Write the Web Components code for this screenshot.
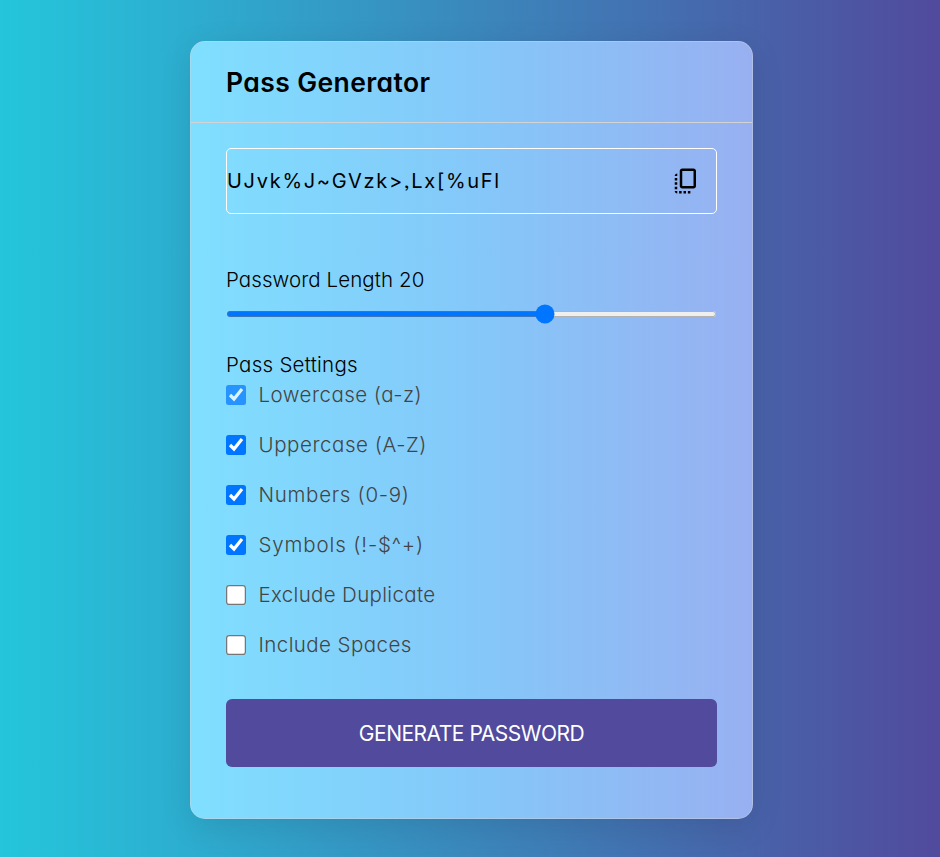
<!DOCTYPE html>
<html lang="en">
<head>
<meta charset="utf-8">
<title>Pass Generator</title>
<style>
html,body{margin:0;height:100%}
body{font-family:Inter,"Liberation Sans",sans-serif;font-feature-settings:"cv11","ss03";color:#000;background:linear-gradient(to right,#24c6dc,#514a9d);overflow:hidden}
</style>
</head>
<body>
<pass-generator></pass-generator>
<script>
class Base extends HTMLElement{
  connectedCallback(){
    if(this.shadowRoot)return;
    this.attachShadow({mode:'open'}).innerHTML='<style>*{box-sizing:border-box}</style>'+this.render();
  }
}
customElements.define('copy-icon',class extends Base{
  render(){return `<style>:host{display:block;width:30px;height:30px}svg{display:block}</style>
  <svg width="30" height="30" viewBox="0 0 24 24"><path d="M18 2H9c-1.1 0-2 .9-2 2v12c0 1.1.9 2 2 2h9c1.1 0 2-.9 2-2V4c0-1.1-.9-2-2-2zm0 14H9V4h9v12zM3 15v-2h2v2H3zm0-5.5h2v2H3v-2zM10 20h2v2h-2v-2zm-7-1.5v-2h2v2H3zM5 22c-1.1 0-2-.9-2-2h2v2zm3.5 0h-2v-2h2v2zm5 0v-2h2v2h-2zM5 6v2H3c0-1.1.9-2 2-2z"/></svg>`}
});
customElements.define('password-box',class extends Base{
  render(){return `<style>:host{box-sizing:border-box;display:flex;align-items:center;justify-content:space-between;height:66px;border:1px solid #fff;border-radius:5px;padding-right:15.5px;font-size:20px;letter-spacing:1.7px;white-space:nowrap}span{padding-bottom:1px}</style>
  <span><slot></slot></span><copy-icon></copy-icon>`}
});
customElements.define('length-slider',class extends Base{
  render(){return `<style>:host{display:block;height:54px}label{display:block;font-size:20.5px;line-height:30px;font-weight:300;letter-spacing:.08px}
  input{display:block;zoom:1.25;margin:12.8px 0 0;width:100%;height:5px;accent-color:#0075ff}</style>
  <label for="r"><slot></slot></label><input id="r" type="range" min="1" max="30" value="20">`}
});
customElements.define('setting-option',class extends Base{
  render(){return `<style>:host{display:flex;align-items:center;height:30px;font-size:20.5px;line-height:30px;font-weight:300;color:#444;letter-spacing:var(--track,0)}
  input{zoom:1.25;width:16px;height:16px;margin:0;accent-color:#0075ff}:host([locked]) input{opacity:.7}label{padding-left:12.5px;white-space:nowrap}</style>
  <input id="c" type="checkbox" ${this.hasAttribute('checked')?'checked':''}><label for="c"><slot></slot></label>`}
});
customElements.define('generate-button',class extends Base{
  render(){return `<style>:host{display:block}button{display:block;width:100%;height:68px;padding:0;border:0;border-radius:6px;background:#514a9d;color:#fff;font:inherit;font-feature-settings:inherit;font-size:21px;letter-spacing:-.5px;text-transform:uppercase}</style>
  <button><slot></slot></button>`}
});
customElements.define('pass-generator',class extends Base{
  render(){return `<style>
  :host{display:flex;justify-content:center;padding:41px 0 0 3px;box-sizing:border-box}
  main{width:563px;height:778px;border:1px solid rgba(209,213,219,.45);border-radius:15px;background:linear-gradient(to right,#80dfff,#84c8f9 50%,#98b0f1) border-box;box-shadow:0 8px 32px rgba(0,0,0,.1)}
  h1{margin:0;height:81px;padding:0 35px;border-bottom:1px solid #d3d3d3;font-size:26.5px;font-weight:600;line-height:80px;letter-spacing:.4px}
  .body{display:flex;flex-direction:column;padding:25px 35px 0}
  length-slider{margin-top:51px}
  h2{margin:31px 0 0;font-size:20.5px;line-height:30px;font-weight:300;letter-spacing:.27px}
  .options{display:flex;flex-direction:column;gap:20px}
  generate-button{margin-top:39px}
  </style>
  <main><h1>Pass Generator</h1><div class="body">
  <password-box>UJvk%J~GVzk&gt;,Lx[%uFl</password-box>
  <length-slider>Password Length 20</length-slider>
  <section><h2>Pass Settings</h2><div class="options">
  <setting-option checked locked style="--track:.47px">Lowercase (a-z)</setting-option>
  <setting-option checked style="--track:.56px">Uppercase (A-Z)</setting-option>
  <setting-option checked style="--track:.7px">Numbers (0-9)</setting-option>
  <setting-option checked style="--track:.86px">Symbols (!-$^+)</setting-option>
  <setting-option style="--track:.33px">Exclude Duplicate</setting-option>
  <setting-option style="--track:.42px">Include Spaces</setting-option>
  </div></section>
  <generate-button>Generate Password</generate-button>
  </div></main>`}
});
</script>
</body>
</html>
